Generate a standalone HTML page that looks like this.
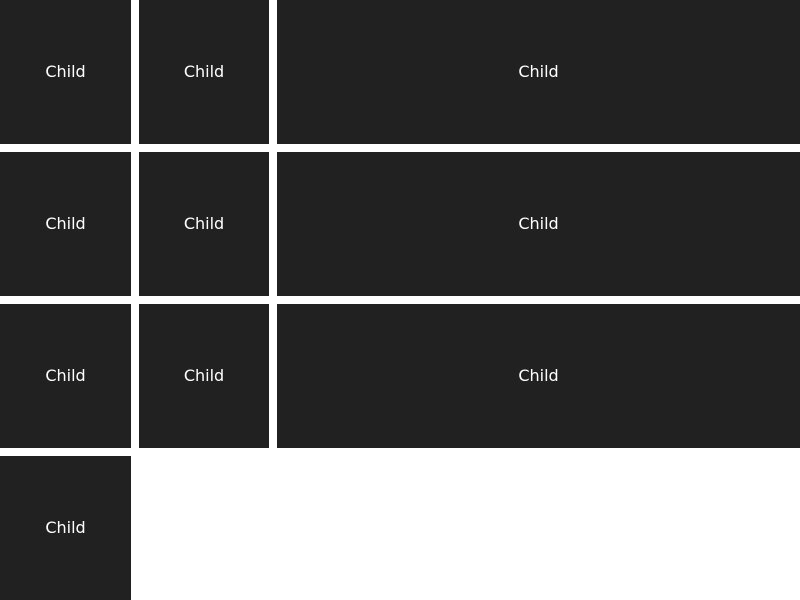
<!DOCTYPE html>
<html><head><meta charset="utf-8"><style>
html,body{margin:0;padding:0;background:#fff;width:800px;height:600px;overflow:hidden}
.g{display:grid;grid-template-columns:131px 130px 523px;column-gap:8px;row-gap:8px;grid-template-rows:144px 144px 144px 144px}
.c{background:#212121;color:#fff;display:flex;align-items:center;justify-content:center;font-family:"DejaVu Sans",sans-serif;font-size:16px}
.c span{position:relative;top:-1px}
</style></head><body>
<div class="g">
<div class="c"><span>Child</span></div><div class="c"><span>Child</span></div><div class="c"><span>Child</span></div>
<div class="c"><span>Child</span></div><div class="c"><span>Child</span></div><div class="c"><span>Child</span></div>
<div class="c"><span>Child</span></div><div class="c"><span>Child</span></div><div class="c"><span>Child</span></div>
<div class="c"><span>Child</span></div>
</div>
</body></html>
